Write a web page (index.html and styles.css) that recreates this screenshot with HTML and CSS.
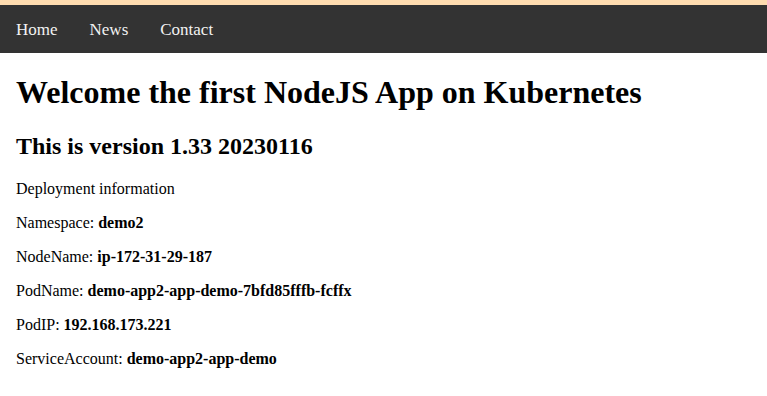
FILE: index.html
```html
<!DOCTYPE html>
<html>
<head>
<meta charset="utf-8">
<link rel="stylesheet" href="styles.css">
</head>
<body>
<div class="strip"></div>
<nav class="topnav">
  <a href="#">Home</a>
  <a href="#">News</a>
  <a href="#">Contact</a>
</nav>
<main class="content">
  <h1>Welcome the first NodeJS App on Kubernetes</h1>
  <h2>This is version 1.33 20230116</h2>
  <p>Deployment information</p>
  <p>Namespace: <b>demo2</b></p>
  <p>NodeName: <b>ip-172-31-29-187</b></p>
  <p>PodName: <b>demo-app2-app-demo-7bfd85fffb-fcffx</b></p>
  <p>PodIP: <b>192.168.173.221</b></p>
  <p>ServiceAccount: <b>demo-app2-app-demo</b></p>
</main>
</body>
</html>
```
FILE: styles.css
```css
html, body {
  margin: 0;
  padding: 0;
  background: #fff;
  font-family: "Liberation Serif", "Times New Roman", serif;
  color: #000;
}
.strip {
  height: 5px;
  background: #ffdcb0;
}
.topnav {
  display: flex;
  background: #333;
  height: 48px;
  align-items: center;
  padding-top: 1px;
  box-sizing: border-box;
}
.topnav a {
  color: #f2f2f2;
  text-decoration: none;
  font-size: 17px;
  padding: 0 16px;
}
.content {
  padding: 0 16px;
}
h1 {
  font-size: 32px;
  margin: 21.44px 0;
}
h2 {
  font-size: 24px;
  margin: 19.92px 0;
}
p {
  font-size: 16px;
  margin: 16px 0;
}
```
